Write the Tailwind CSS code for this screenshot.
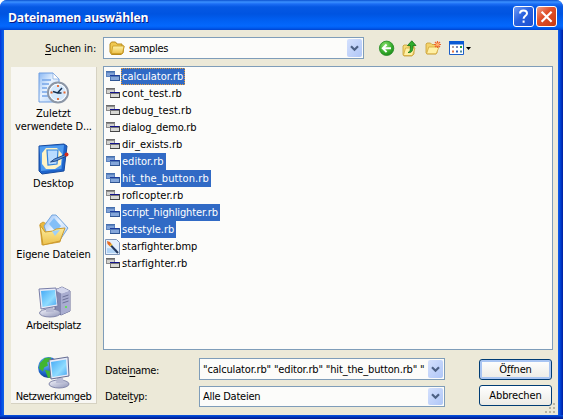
<!DOCTYPE html>
<html lang="de">
<head>
<meta charset="utf-8">
<title>Dateinamen auswählen</title>
<script src="https://cdn.jsdelivr.net/npm/@tailwindcss/browser@4"></script>
</head>
<body class="w-[563px] h-[419px] overflow-hidden bg-white font-['DejaVu_Sans_Condensed','DejaVu_Sans',sans-serif] text-[11px] leading-[13px] text-black cursor-default">
<svg class="absolute size-0">
  <defs>
    <linearGradient id="paper" x1="0" y1="0" x2="1" y2="1"><stop offset="0" stop-color="#8ab8f4"/><stop offset=".45" stop-color="#e8f3ff"/><stop offset="1" stop-color="#aacdf8"/></linearGradient>
    <linearGradient id="folder" x1="0" y1="0" x2="0" y2="1"><stop offset="0" stop-color="#fff3a8"/><stop offset="1" stop-color="#ecc04b"/></linearGradient>
    <linearGradient id="screen" x1="0" y1="0" x2="1" y2="1"><stop offset="0" stop-color="#46a9f5"/><stop offset=".6" stop-color="#8fdcff"/><stop offset="1" stop-color="#4aa4f0"/></linearGradient>
    <linearGradient id="metal" x1="0" y1="0" x2="1" y2="1"><stop offset="0" stop-color="#f4f5fc"/><stop offset="1" stop-color="#9095b8"/></linearGradient>
    <radialGradient id="green" cx=".4" cy=".3" r=".8"><stop offset="0" stop-color="#8be070"/><stop offset=".6" stop-color="#35ab2b"/><stop offset="1" stop-color="#177f17"/></radialGradient>
    <radialGradient id="globe" cx=".35" cy=".3" r=".8"><stop offset="0" stop-color="#70b9ff"/><stop offset=".6" stop-color="#1c62c8"/><stop offset="1" stop-color="#0b2c78"/></radialGradient>
    <symbol id="wins" viewBox="0 0 14 11">
      <path d="M0 0h9v6H0z" fill="#8c8c8c"/><path d="M1 2h7v3H1z" fill="#d2d2ce"/><path d="M0 0h9v1H0z" fill="#6a6a6a"/>
      <path d="M4 4h10v6H4z" fill="#777"/><path d="M5 6h8v3H5z" fill="#d8d8d4"/><path d="M4 4h9v1H4z" fill="#12128c"/><path d="M13 4h1v6H4V9h9z" fill="#444"/>
    </symbol>
    <symbol id="winsel" viewBox="0 0 14 11">
      <path d="M0 0h9v6H0z" fill="#5c84bf"/><path d="M1 2h7v3H1z" fill="#80a2d6"/><path d="M0 0h9v1H0z" fill="#4770ad"/>
      <path d="M4 4h10v6H4z" fill="#5279b6"/><path d="M5 6h8v3H5z" fill="#84a6da"/><path d="M4 4h9v1H4z" fill="#1c3c9c"/><path d="M13 4h1v6H4V9h9z" fill="#2f5593"/>
    </symbol>
    <symbol id="chev" viewBox="0 0 9 7"><path d="M1 1.2l3.500 3.500L8 1.200" fill="none" stroke="#4d6185" stroke-width="2.2"/></symbol>
  </defs>
</svg>

<div class="w-[563px] h-[419px] flex flex-col rounded-t-[7px] overflow-hidden bg-[linear-gradient(90deg,#0831d9_0,#0054e3_2px,#1660e8_4px,#1660e8_558px,#0046dc_560px,#001ea0_563px)]">
  <header class="h-[30px] shrink-0 flex items-center pl-[8px] pr-[6px] bg-[linear-gradient(180deg,#0a51cf_0,#3b91ff_2px,#1b6df4_4px,#0558e3_7px,#0054e1_14px,#0161f4_21px,#0368fd_26px,#005bee_28px,#0043cf_30px)]">
    <h1 class="grow font-bold text-[13px] leading-[18px] text-white pt-[4px] whitespace-nowrap font-['Open_Sans','Noto_Sans',sans-serif] [text-shadow:1px_1px_0_#0a1883]"><span class="inline-block origin-left scale-x-[0.935] tracking-[-0.2px]">Dateinamen auswählen</span></h1>
    <div class="flex gap-[2px] pt-[3px]">
      <button class="size-[21px] rounded-[3px] border border-white bg-[linear-gradient(135deg,#6f9bf5,#2a62df_45%,#1a4fd0)] flex items-center justify-center" aria-label="Hilfe">
        <svg width="19" height="19" viewBox="0 0 19 19" fill="none" stroke="#fff" stroke-width="2"><path d="M6 6.500C6 4.600 7.400 3.600 9.500 3.600s3.500 1 3.500 2.800c0 2.400-3.400 2.400-3.400 5.400M9.600 13.500v2.200"/></svg>
      </button>
      <button class="size-[21px] rounded-[3px] border border-white bg-[linear-gradient(135deg,#f0a088,#e0512c_40%,#c93a10)] flex items-center justify-center" aria-label="Schließen">
        <svg width="19" height="19" viewBox="0 0 19 19" stroke="#fff" stroke-width="2.2"><path d="M4.600 4.800l10 10M14.600 4.800l-10 10"/></svg>
      </button>
    </div>
  </header>

  <main class="mx-[4px] mr-[5px] h-[385px] shrink-0 bg-[#ece9d8] flex flex-col pl-[7px] pr-[5px] relative">
    <div class="h-[36px] shrink-0 flex pt-[7px]">
      <label class="w-[92px] pl-[34px] pt-[5px] whitespace-nowrap"><span class="tracking-[-0.1px]"><u class="underline-offset-2">S</u>uchen in:</span></label>
      <div class="w-[261px] h-[22px] border border-[#7f9db9] bg-[#fcfcfa] flex items-center pl-[5px] pr-[1px]">
        <svg width="16" height="14" viewBox="0 0 16 14"><path d="M1 11V3l1.500-2h4L8 3h5v2h2l-1 7-2 1.500H2.500z" fill="#f0c850" stroke="#b98a1c"/><path d="M3.800 5H15l-1.500 7.500H2.400z" fill="url(#folder)" stroke="#c8981f" stroke-width=".8"/></svg>
        <span class="pl-[4px] grow tracking-[-0.3px]">samples</span>
        <span class="w-[15px] h-[18px] rounded-[2px] bg-linear-to-br from-[#d5e1fd] to-[#afc6f7] flex items-center justify-center"><svg width="9" height="7"><use href="#chev"/></svg></span>
      </div>
      <div class="flex pl-[14px] pt-[3px]">
        <svg width="18" height="17" viewBox="0 0 18 17"><circle cx="8.600" cy="8.300" r="7.200" fill="url(#green)" stroke="#268a25" stroke-width=".8"/><path d="M13 8.300H5M8.600 4.500L4.800 8.300l3.800 3.800" fill="none" stroke="#fff" stroke-width="2"/></svg>
        <svg class="ml-[6px]" width="16" height="17" viewBox="0 0 16 17"><path d="M1 14.500V6l1-1h3l1 1h6v8l-2 2H2z" fill="#f6dc79" stroke="#c79d34" stroke-width=".8"/><path d="M3.500 8H13l-2.500 7.500H1.400z" fill="#fff0a4" stroke="#d2a73c" stroke-width=".8"/><path d="M6 12.500c2.600-.5 2.400-3 2.400-7H5.500L9.800.8l4.200 4.700H11c0 4.500-.7 7.700-5 7z" fill="#2fae2d" stroke="#137214" stroke-width=".8"/></svg>
        <svg class="ml-[7px]" width="17" height="17" viewBox="0 0 17 17"><path d="M1 13V4l1-1h3.500L7 4.500h5V13L11 14H2z" fill="#f3d26b" stroke="#c79d34" stroke-width=".8"/><path d="M3.800 7H14l-2.800 6.800H1.500z" fill="#fff0a4" stroke="#d2a73c" stroke-width=".8"/><path d="M12.500 1v7M9 4.500h7M10 2l5 5M15 2l-5 5" stroke="#ee622c" stroke-width="1.200"/><circle cx="12.500" cy="4.500" r="1.600" fill="#ffb56c"/></svg>
        <svg class="ml-[7px]" width="23" height="17" viewBox="0 0 23 17"><path d="M.5 1.500h14v13H.5z" fill="#fff" stroke="#1c5fc8"/><path d="M0 1h15v3.500H0z" fill="#0a59d4"/><path d="M3 6h2v2H3z" fill="#b0a0a0"/><path d="M7 6h2v2H7z" fill="#7b86b6"/><path d="M11 6h2v2h-2z" fill="#269c3d"/><path d="M3 10.500h2v2H3z" fill="#e17241"/><path d="M7 10.500h2v2H7z" fill="#2b5fbc"/><path d="M11 10.500h2v2h-2z" fill="#4d8a9c"/><path d="M17 7h5l-2.500 3z" fill="#000"/></svg>
      </div>
    </div>

    <div class="flex">
      <nav class="w-[86px] h-[337px] mt-px mr-[6px] shrink-0 bg-[#f8f7f3] border-r border-b border-[#d6d2c2] flex flex-col items-center text-center whitespace-nowrap overflow-hidden">
        <div class="h-[71px] shrink-0 pt-[5px] flex flex-col items-center">
          <svg width="32" height="32" viewBox="0 0 32 32"><path d="M2 1h14l6 6v23H2z" fill="url(#paper)" stroke="#6e9de0"/><path d="M16 1v6h6z" fill="#fff" stroke="#7ea6dc" stroke-width=".7"/><path d="M5 8h9M5 12h7M5 16h5M5 20h5M5 24h6" stroke="#76a5e8" stroke-width="1.400"/><circle cx="21" cy="20.500" r="10" fill="#dcebfa" stroke="#8d97a6" stroke-width="2"/><circle cx="21" cy="20.500" r="8.300" fill="#d5e9fd" stroke="#fff"/><path d="M21 13v2M21 26v2M13.500 20.500h2M26.500 20.500h2" stroke="#e9672c" stroke-width="1.800"/><path d="M25 16l-4.500 5L16 19.500M20.500 21h4" stroke="#17304f" stroke-width="1.500" fill="none"/></svg>
          <span class="pt-[3px]">Zuletzt<br><span class="tracking-[-0.15px]">verwendete D...</span></span>
        </div>
        <div class="h-[71px] shrink-0 pt-[5px] flex flex-col items-center">
          <svg width="32" height="32" viewBox="0 0 32 32"><path d="M2 3l25-2 3 2-3 25-22 3-3-3z" fill="#1d63cb" stroke="#174b9e"/><path d="M2.500 3.500L27 2l-2.500 24L4 28z" fill="#4f9bef"/><path d="M9 5h11l5 6-1 11-6 4H9l-4-5V10z" fill="#fff4c5"/><path d="M10 7h11l-1 14-9 1z" fill="#b9dcff" stroke="#3183dd" stroke-width="1.200"/><path d="M13.500 19l4-3 11-4.500 1 1.500L19 18z" fill="#5c95dc" stroke="#173d78" stroke-width=".9"/><circle cx="29.500" cy="11.500" r="2" fill="#d32d1d"/></svg>
          <span class="pt-[2px]">Desktop</span>
        </div>
        <div class="h-[71px] shrink-0 pt-[5px] flex flex-col items-center">
          <svg width="32" height="32" viewBox="0 0 32 32"><path d="M3 10l3-2 6 3 14 3-3 14-18 3z" fill="#e9b940" stroke="#c99529" stroke-width=".8"/><path d="M7 12L15 1l4 0 12 13-8 12-12-3z" fill="url(#paper)" stroke="#75a6dd"/><path d="M12 10l5-6 7 8-5 6z" fill="#83bff8"/><path d="M3 11l5 7 8-1 3-2 9-1-5 13-17 4z" fill="url(#folder)" stroke="#cc9a2d"/><path d="M15 17l8-1-5 6z" fill="#9ed0fa"/></svg>
          <span class="pt-[2px] tracking-[-0.1px]">Eigene Dateien</span>
        </div>
        <div class="h-[71px] shrink-0 pt-[6px] flex flex-col items-center">
          <svg width="34" height="32" viewBox="0 0 34 32"><path d="M18 4l7-3 8 4v20l-9 4-6-4z" fill="#8589b1" stroke="#666b95"/><path d="M18 4l7-3 8 4-8 3z" fill="#d3d6ec"/><path d="M24 8l9-3v20l-9 4z" fill="#a9add0"/><path d="M25.500 11l6-2M25.500 14l6-2M25.500 17l6-2" stroke="#6d7299"/><path d="M28 20h2v2h-2z" fill="#63dc5c"/><ellipse cx="13" cy="27" rx="10.500" ry="4" fill="url(#metal)" stroke="#8287aa"/><path d="M9 20h7l1 6h-8z" fill="#b7bad3"/><path d="M2 3l17-1 2 18-17 3z" fill="#e8eaf7" stroke="#787ea8"/><path d="M4 5l14-1 1.500 14.500L5.500 21z" fill="url(#screen)"/></svg>
          <span class="pt-px tracking-[-0.4px]">Arbeitsplatz</span>
        </div>
        <div class="h-[53px] shrink-0 pt-[5px] flex flex-col items-center">
          <svg width="33" height="33" viewBox="0 0 33 33"><circle cx="11.500" cy="11.500" r="10.500" fill="url(#globe)"/><path d="M3 7l5-5 6-.500-1 4-3 1 1 3-4 2-1 4-4-3zM8 14l6 1 1 6-4 1z" fill="#41b531"/><ellipse cx="22" cy="28" rx="10" ry="4" fill="url(#metal)" stroke="#8287aa"/><path d="M20 22h6l1 5h-8z" fill="#b7bad3"/><path d="M12 4l19-3 1 19-18 3z" fill="#e8eaf7" stroke="#646b91"/><path d="M14 6l15-2.500 1 15L15.500 21z" fill="url(#screen)"/></svg>
          <span class="pt-px tracking-[-0.4px]">Netzwerkumgeb</span>
        </div>
      </nav>

      <section class="flex flex-col">
        <ul class="w-[450px] h-[284px] border border-[#7f9db9] bg-[#fcfcfa] pt-[1px] pl-[2px] whitespace-nowrap">
          <li class="h-[17px] flex items-center"><svg class="mr-[1px]" width="14" height="11"><use href="#winsel"/></svg><span class="h-[17px] leading-[18px] pl-px pr-[2px] bg-[#316ac5] text-white outline-1 outline-dotted -outline-offset-1 outline-[#e09a40]">calculator.rb</span></li>
          <li class="h-[17px] flex items-center"><svg class="mr-[1px]" width="14" height="11"><use href="#wins"/></svg><span class="h-[17px] leading-[18px] pl-px tracking-[0.07px]">cont_test.rb</span></li>
          <li class="h-[17px] flex items-center"><svg class="mr-[1px]" width="14" height="11"><use href="#wins"/></svg><span class="h-[17px] leading-[18px] pl-px tracking-[0.07px]">debug_test.rb</span></li>
          <li class="h-[17px] flex items-center"><svg class="mr-[1px]" width="14" height="11"><use href="#wins"/></svg><span class="h-[17px] leading-[18px] pl-px tracking-[-0.15px]">dialog_demo.rb</span></li>
          <li class="h-[17px] flex items-center"><svg class="mr-[1px]" width="14" height="11"><use href="#wins"/></svg><span class="h-[17px] leading-[18px] pl-px">dir_exists.rb</span></li>
          <li class="h-[17px] flex items-center"><svg class="mr-[1px]" width="14" height="11"><use href="#winsel"/></svg><span class="h-[17px] leading-[18px] pl-px pr-[2px] bg-[#316ac5] text-white">editor.rb</span></li>
          <li class="h-[17px] flex items-center"><svg class="mr-[1px]" width="14" height="11"><use href="#winsel"/></svg><span class="h-[17px] leading-[18px] pl-px pr-[2px] bg-[#316ac5] text-white tracking-[0.1px]">hit_the_button.rb</span></li>
          <li class="h-[17px] flex items-center"><svg class="mr-[1px]" width="14" height="11"><use href="#wins"/></svg><span class="h-[17px] leading-[18px] pl-px tracking-[0.07px]">roflcopter.rb</span></li>
          <li class="h-[17px] flex items-center"><svg class="mr-[1px]" width="14" height="11"><use href="#winsel"/></svg><span class="h-[17px] leading-[18px] pl-px pr-[2px] bg-[#316ac5] text-white tracking-[-0.13px]">script_highlighter.rb</span></li>
          <li class="h-[17px] flex items-center"><svg class="mr-[1px]" width="14" height="11"><use href="#winsel"/></svg><span class="h-[17px] leading-[18px] pl-px pr-[2px] bg-[#316ac5] text-white">setstyle.rb</span></li>
          <li class="h-[17px] flex items-center"><svg class="-ml-px mr-px" width="15" height="16" viewBox="0 0 15 16"><path d="M.5.500h11l3 3v12H.5z" fill="#e3effc" stroke="#7f96b8"/><path d="M2 9l10 1v4H2z" fill="#b2d4f5"/><path d="M2 2l3 1 2 3-2 1.500L2.500 5z" fill="#e66b22"/><path d="M5.500 6l7.500 8" stroke="#23375b" stroke-width="2"/><path d="M5 7l2-2" stroke="#efc23d" stroke-width="1.500"/></svg><span class="h-[17px] leading-[18px] pl-px tracking-[-0.07px]">starfighter.bmp</span></li>
          <li class="h-[17px] flex items-center"><svg class="mr-[1px]" width="14" height="11"><use href="#wins"/></svg><span class="h-[17px] leading-[18px] pl-px tracking-[0.07px]">starfighter.rb</span></li>
        </ul>
        <div class="flex pt-[8px] pl-[2px]">
          <div class="w-[94px] flex flex-col gap-[13px] pt-[6px]"><label class="tracking-[-0.4px]">Datei<u class="underline-offset-2">n</u>ame:</label><label class="tracking-[-0.4px]">Datei<u class="underline-offset-2">t</u>yp:</label></div>
          <div class="w-[246px] flex flex-col gap-[6px] whitespace-nowrap">
            <div class="h-[22px] border border-[#7f9db9] bg-[#fcfcfa] flex items-center pl-[3px] pr-[1px]"><span class="w-[224px] shrink-0 tracking-[-0.16px]">"calculator.rb" "editor.rb" "hit_the_button.rb" "</span><span class="w-[15px] h-[18px] shrink-0 ml-auto rounded-[2px] bg-linear-to-br from-[#d5e1fd] to-[#afc6f7] flex items-center justify-center"><svg width="9" height="7"><use href="#chev"/></svg></span></div>
            <div class="h-[21px] border border-[#7f9db9] bg-[#fcfcfa] flex items-center pl-[3px] pr-[1px]"><span class="grow tracking-[-0.25px]">Alle Dateien</span><span class="w-[15px] h-[17px] shrink-0 rounded-[2px] bg-linear-to-br from-[#d5e1fd] to-[#afc6f7] flex items-center justify-center"><svg width="9" height="7"><use href="#chev"/></svg></span></div>
          </div>
          <div class="flex flex-col gap-[5px] pl-[34px] pt-[1px]">
            <button class="w-[73px] h-[21px] rounded-[3px] border border-[#003c74] bg-linear-to-b from-white to-[#ecebe5] shadow-[inset_0_0_0_2px_#a9c5f2] tracking-[-0.15px]">Ö<u class="underline-offset-2">f</u>fnen</button>
            <button class="w-[73px] h-[21px] rounded-[3px] border border-[#003c74] bg-linear-to-b from-white to-[#ecebe5] tracking-[-0.1px]">Abbrechen</button>
          </div>
        </div>
      </section>
    </div>
    <svg class="absolute right-[2px] bottom-[1px]" width="12" height="12" viewBox="0 0 12 12" fill="#b8b4a2"><path d="M9 1h2v2H9zM5 5h2v2H5zM9 5h2v2H9zM1 9h2v2H1zM5 9h2v2H5zM9 9h2v2H9z"/></svg>
  </main>
  <footer class="h-[4px] shrink-0 bg-linear-to-b from-[#0b55e4] to-[#00138c]"></footer>
</div>
</body>
</html>
